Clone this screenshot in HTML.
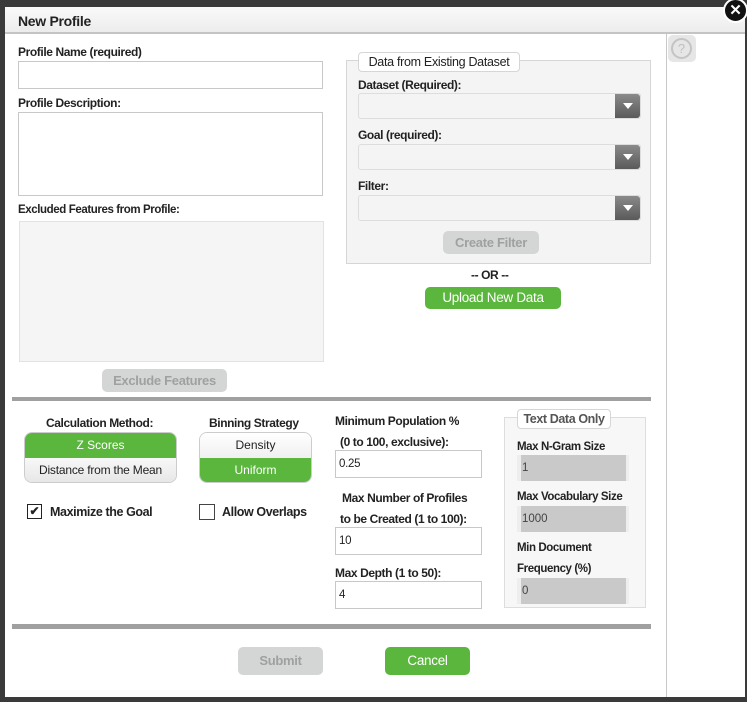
<!DOCTYPE html>
<html><head><style>
*{box-sizing:border-box;margin:0;padding:0}
body{width:747px;height:702px;background:#3a3a3a;position:relative;overflow:hidden;font-family:"Liberation Sans",sans-serif;color:#222}
.a{position:absolute}
.lb{position:absolute;font-size:12px;font-weight:bold;letter-spacing:-0.4px;white-space:nowrap}
.in{position:absolute;background:#fff;border:1px solid #c8c8c8;font-size:11.5px;padding-left:3px;line-height:26px;letter-spacing:-0.3px}
.sel{position:absolute;background:#f4f4f4;border:1px solid #ddd;border-radius:3px;height:26px;width:283px;left:358px}
.sel i{position:absolute;right:0;top:0;width:25px;height:24px;background:linear-gradient(#8a8a8a,#5a5a5a);border-radius:0 3px 3px 0}
.sel i:after{content:"";position:absolute;left:8px;top:9px;border-left:5px solid transparent;border-right:5px solid transparent;border-top:6px solid #fff}
.btn{position:absolute;border-radius:5px;text-align:center;font-size:13px;letter-spacing:-0.3px}
.gray{background:#d4d6d6;color:#a0a0a0;font-weight:bold}
.green{background:#5ab63c;color:#fff}
.tin{position:absolute;left:517px;width:112px;height:26px;background:#c9c9c9;border-left:4px solid #eee;border-right:3px solid #eee;font-size:11.5px;line-height:26px;padding-left:1px;color:#444}
</style></head><body>
<div class="a" style="left:5px;top:7px;width:740px;height:690px;background:#fff"></div>
<div class="a" style="left:5px;top:7px;width:740px;height:27px;background:linear-gradient(#fafafa,#ececec);border-bottom:2px solid #c4c4c4"></div>
<div class="a" style="left:18px;top:13px;font-size:14px;font-weight:bold;letter-spacing:-0.3px">New Profile</div>
<div class="a" style="left:666px;top:34px;width:1px;height:663px;background:#c8c8c8"></div>
<div class="a" style="left:668px;top:35px;width:28px;height:27px;background:#e6e6e6;border-radius:5px"></div>
<div class="a" style="left:671px;top:38px;width:21px;height:21px;border:2px solid #c4c4c4;border-radius:50%;color:#c0c0c0;font-size:13px;text-align:center;line-height:17px">?</div>
<div class="a" style="left:723px;top:-2px;width:25px;height:25px;background:#111;border-radius:50%;border:2px solid #fff;color:#fff;font-weight:bold;font-size:15px;text-align:center;line-height:21px">✕</div>

<div class="lb" style="left:18px;top:45px">Profile Name (required)</div>
<div class="in" style="left:18px;top:61px;width:305px;height:28px"></div>
<div class="lb" style="left:18px;top:96px">Profile Description:</div>
<div class="in" style="left:18px;top:112px;width:305px;height:84px"></div>
<div class="lb" style="left:18px;top:204px;font-size:11.5px">Excluded Features from Profile:</div>
<div class="a" style="left:19px;top:221px;width:305px;height:141px;background:#f5f5f5;border:1px solid #e2e2e2"></div>
<div class="btn gray" style="left:102px;top:369px;width:125px;height:23px;line-height:23px">Exclude Features</div>

<div class="a" style="left:346px;top:60px;width:305px;height:204px;background:#f4f4f4;border:1px solid #d6d6d6"></div>
<div class="a" style="left:358px;top:52px;width:162px;height:20px;background:#fff;border:1px solid #d6d6d6;border-radius:4px;font-size:12.5px;text-align:center;line-height:18px;letter-spacing:-0.3px">Data from Existing Dataset</div>
<div class="lb" style="left:358px;top:78px">Dataset (Required):</div>
<div class="sel" style="top:93px"><i></i></div>
<div class="lb" style="left:358px;top:128px">Goal (required):</div>
<div class="sel" style="top:144px"><i></i></div>
<div class="lb" style="left:358px;top:179px">Filter:</div>
<div class="sel" style="top:195px"><i></i></div>
<div class="btn gray" style="left:443px;top:231px;width:96px;height:23px;line-height:23px">Create Filter</div>
<div class="lb" style="left:471px;top:268px">-- OR --</div>
<div class="btn green" style="left:425px;top:287px;width:136px;height:22px;line-height:22px;font-size:13.5px">Upload New Data</div>

<div class="a" style="left:12px;top:397px;width:639px;height:4px;background:#a0a0a0"></div>

<div class="lb" style="left:46px;top:416px">Calculation Method:</div>
<div class="a" style="left:24px;top:432px;width:153px;height:51px;border-radius:8px;overflow:hidden;border:1px solid #ccc">
<div style="height:25px;background:#5ab63c;color:#fff;font-size:12px;text-align:center;line-height:25px">Z Scores</div>
<div style="height:25px;background:linear-gradient(#f8f8f8,#e6e6e6);font-size:12px;text-align:center;line-height:25px;letter-spacing:-0.2px">Distance from the Mean</div></div>
<div class="lb" style="left:209px;top:416px">Binning Strategy</div>
<div class="a" style="left:199px;top:432px;width:113px;height:51px;border-radius:8px;overflow:hidden;border:1px solid #ccc">
<div style="height:25px;background:linear-gradient(#fff,#f0f0f0);font-size:12px;text-align:center;line-height:25px">Density</div>
<div style="height:25px;background:#5ab63c;color:#fff;font-size:12px;text-align:center;line-height:25px">Uniform</div></div>

<div class="a" style="left:27px;top:504px;width:15px;height:15px;border:1px solid #222;background:#fff;font-size:12px;line-height:13px;text-align:center;font-weight:bold">✔</div>
<div class="lb" style="left:50px;top:505px;font-size:12.5px">Maximize the Goal</div>
<div class="a" style="left:199px;top:504px;width:16px;height:16px;border:1px solid #444;background:#fff"></div>
<div class="lb" style="left:222px;top:505px;font-size:12.5px">Allow Overlaps</div>

<div class="lb" style="left:335px;top:414px">Minimum Population %</div>
<div class="lb" style="left:340px;top:435px">(0 to 100, exclusive):</div>
<div class="in" style="left:335px;top:450px;width:147px;height:28px">0.25</div>
<div class="lb" style="left:342px;top:491px">Max Number of Profiles</div>
<div class="lb" style="left:340px;top:512px">to be Created (1 to 100):</div>
<div class="in" style="left:335px;top:527px;width:147px;height:28px">10</div>
<div class="lb" style="left:335px;top:566px">Max Depth (1 to 50):</div>
<div class="in" style="left:335px;top:581px;width:147px;height:28px">4</div>

<div class="a" style="left:504px;top:417px;width:142px;height:191px;background:#f7f7f7;border:1px solid #ddd"></div>
<div class="a" style="left:517px;top:409px;width:94px;height:20px;background:#fff;border:1px solid #d6d6d6;border-radius:4px;font-size:12.5px;font-weight:bold;color:#555;text-align:center;line-height:18px;letter-spacing:-0.4px">Text Data Only</div>
<div class="lb" style="left:517px;top:441px;font-size:11.5px">Max N-Gram Size</div>
<div class="tin" style="top:455px">1</div>
<div class="lb" style="left:517px;top:491px;font-size:11.5px">Max Vocabulary Size</div>
<div class="tin" style="top:506px">1000</div>
<div class="lb" style="left:517px;top:542px;font-size:11.5px">Min Document</div>
<div class="lb" style="left:517px;top:563px;font-size:11.5px">Frequency (%)</div>
<div class="tin" style="top:578px">0</div>

<div class="a" style="left:12px;top:624px;width:639px;height:5px;background:#a0a0a0"></div>
<div class="btn gray" style="left:238px;top:647px;width:85px;height:28px;line-height:28px">Submit</div>
<div class="btn green" style="left:385px;top:647px;width:85px;height:28px;line-height:28px;font-size:13.5px">Cancel</div>
</body></html>
